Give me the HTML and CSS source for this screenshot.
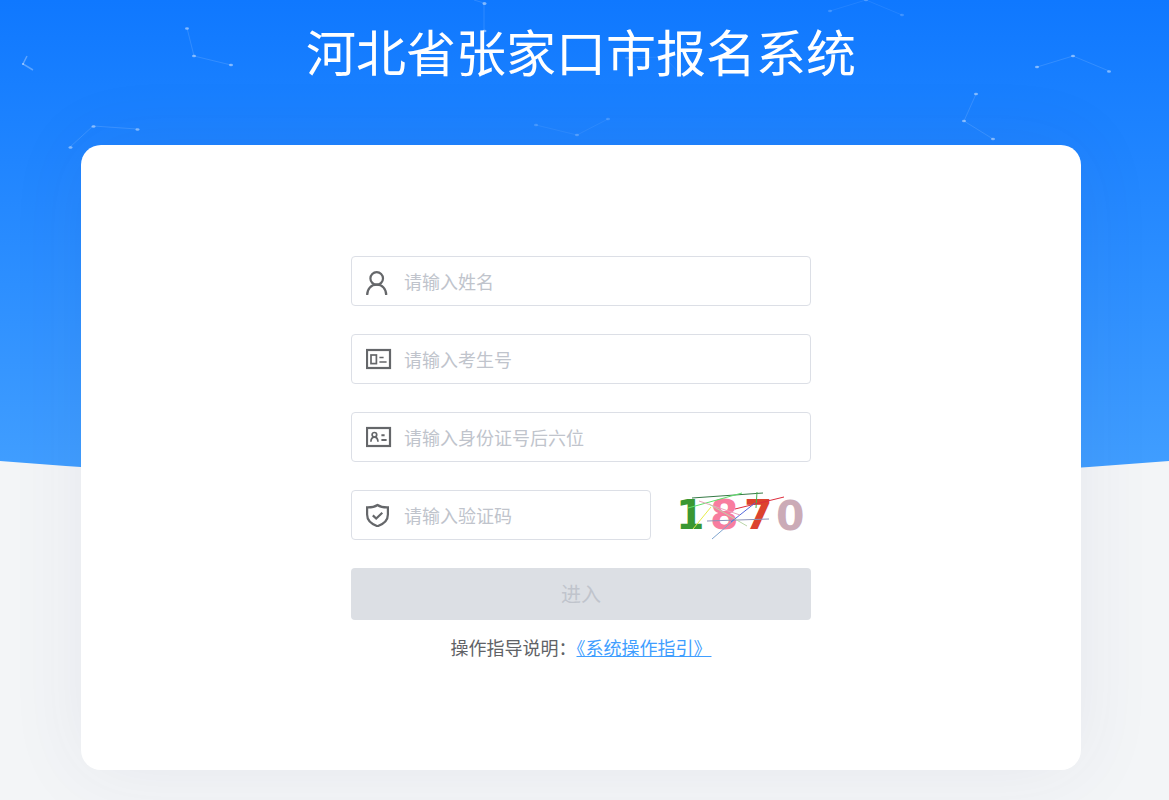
FILE: index.html
```html
<!DOCTYPE html>
<html lang="zh-CN">
<head>
    <meta charset="UTF-8">
    <meta name="viewport" content="width=device-width, initial-scale=1.0">
    <title>河北省张家口市报名系统</title>
    <link rel="stylesheet" href="styles.css">
</head>
<body>

<div class="page">
    <svg class="page-bg" viewBox="0 0 1169 520" preserveAspectRatio="none" aria-hidden="true">
        <defs>
            <linearGradient id="sky" x1="0" y1="0" x2="0" y2="1">
                <stop offset="0" stop-color="#0f78ff"/>
                <stop offset="1" stop-color="#429fff"/>
            </linearGradient>
        </defs>
        <path d="M0 0H1169V461Q584 508 0 461Z" fill="url(#sky)"/>
        <g class="lines">
            <path class="bright" d="M27 56L23 64L33 70"/>
            <path d="M187 28L194 56L231 65"/>
            <path d="M70 147L93 126L137 129"/>
            <path d="M474 0L484 3V31"/>
            <path d="M536 125L577 135L608 119" opacity=".5"/>
            <path d="M627 58L664 57L684 78" opacity=".5"/>
            <path d="M830 11L866 0L902 15" opacity=".6"/>
            <path d="M1037 67L1073 56L1109 71"/>
            <path d="M976 94L964 121L993 139"/>
        </g>
        <g class="dots">
            <ellipse cx="23" cy="64" rx="1" ry="1"/>
            <ellipse cx="187" cy="28.5" rx="2" ry="1.3"/>
            <ellipse cx="194" cy="56" rx="2" ry="1.3"/>
            <ellipse cx="231" cy="65" rx="2" ry="1.3"/>
            <ellipse cx="70.5" cy="147.5" rx="2" ry="1.3"/>
            <ellipse cx="93.5" cy="126.5" rx="2" ry="1.3"/>
            <ellipse cx="137.5" cy="129.5" rx="2" ry="1.3"/>
            <ellipse cx="484.5" cy="3.5" rx="2" ry="1.5"/>
            <ellipse cx="484.5" cy="31" rx="2" ry="1.3"/>
            <ellipse cx="536" cy="125" rx="2" ry="1.3" opacity=".4"/>
            <ellipse cx="577" cy="135" rx="2" ry="1.3" opacity=".5"/>
            <ellipse cx="608" cy="119" rx="2" ry="1.3" opacity=".4"/>
            <ellipse cx="627" cy="58" rx="2" ry="1.3" opacity=".4"/>
            <ellipse cx="830" cy="11" rx="2" ry="1.3" opacity=".4"/>
            <ellipse cx="866" cy="0" rx="2" ry="1.3" opacity=".5"/>
            <ellipse cx="902" cy="15" rx="2" ry="1.3" opacity=".4"/>
            <ellipse cx="1037" cy="67" rx="2" ry="1.3"/>
            <ellipse cx="1073" cy="56" rx="2" ry="1.3"/>
            <ellipse cx="1109" cy="71.5" rx="2" ry="1.3"/>
            <ellipse cx="976" cy="94" rx="2" ry="1.3"/>
            <ellipse cx="964" cy="121" rx="2" ry="1.3"/>
            <ellipse cx="993" cy="139" rx="2" ry="1.3"/>
        </g>
    </svg>

    <main class="content">
        <h1 class="title">河北省张家口市报名系统</h1>

        <div class="card">
            <form class="login-form">
                <label class="field">
                    <svg class="icon" width="26" height="28" viewBox="0 0 26 28" role="img" aria-label="姓名">
                        <circle cx="10.7" cy="11.4" r="6.3"/>
                        <path d="M1.2 28C1.2 21.8 5.2 17.7 10.7 17.7S20.2 21.8 20.2 28"/>
                    </svg>
                    <input type="text" name="name" placeholder="请输入姓名">
                </label>

                <label class="field">
                    <svg class="icon" width="26" height="24" viewBox="0 0 26 24" role="img" aria-label="考生号">
                        <rect x="1" y="3" width="23" height="18"/>
                        <rect x="5" y="8" width="5.4" height="8.6" stroke-width="1.7"/>
                        <path d="M13.4 10.5H17.6M13.4 15H20.6" stroke-width="1.7"/>
                    </svg>
                    <input type="text" name="examNo" placeholder="请输入考生号">
                </label>

                <label class="field">
                    <svg class="icon" width="26" height="24" viewBox="0 0 26 24" role="img" aria-label="身份证号">
                        <rect x="1" y="3" width="23" height="18"/>
                        <circle cx="8.4" cy="9.8" r="2.3" stroke-width="1.7"/>
                        <path d="M4.9 16.8C5 13.8 6.4 12.1 8.4 12.1S11.8 13.8 12 16.8" stroke-width="1.7"/>
                        <path d="M15.4 10.2H18.6M15.4 15H20.6" stroke-width="1.9"/>
                    </svg>
                    <input type="text" name="idCard" placeholder="请输入身份证号后六位">
                </label>

                <div class="captcha-row">
                    <label class="field">
                        <svg class="icon" width="26" height="24" viewBox="0 0 26 24" role="img" aria-label="验证码">
                            <path d="M11.5 2C8.8 3.8 5.2 4.5 1.1 4.4V11.6C1.1 17.4 5.4 21.2 11.5 23.2C17.6 21.2 21.9 17.4 21.9 11.6V4.4C17.8 4.5 14.2 3.8 11.5 2Z"/>
                            <path d="M6.8 12.4L10.2 15.6L16.3 9.8"/>
                        </svg>
                        <input type="text" name="captcha" placeholder="请输入验证码">
                    </label>
                    <button type="button" class="captcha" aria-label="刷新验证码">
                        <svg width="160" height="50" viewBox="0 0 160 50">
                            <g class="digits">
                                <text x="25" y="39" fill="#3a9732">1</text>
                                <text x="59" y="39" fill="#f87d9f">8</text>
                                <text x="93" y="39" fill="#dc422e">7</text>
                                <text x="125" y="40" fill="#cbabb7">0</text>
                            </g>
                            <g class="noise">
                                <path d="M41 8L112 3" stroke="#357a45"/>
                                <path d="M37 18L91 3" stroke="#5fe06a"/>
                                <path d="M106 2L105 18" stroke="#48b04c"/>
                                <path d="M84 19L133 7" stroke="#dd2c3c"/>
                                <path d="M56 31L118 29" stroke="#8d92b8"/>
                                <path d="M61 49L83 30" stroke="#7fa5cf"/>
                                <path d="M80 32L104 13" stroke="#5468dc"/>
                                <path d="M42 39L60 17" stroke="#e6ec4a"/>
                                <path d="M48 11L89 25" stroke="#e9a5bb"/>
                                <path d="M58 14L96 36" stroke="#b9d5a8"/>
                            </g>
                        </svg>
                    </button>
                </div>

                <button type="submit" class="submit" disabled>进入</button>
            </form>

            <p class="guide">操作指导说明&#65306;<a href="#">《系统操作指引》</a></p>
        </div>
    </main>
</div>

</body>
</html>
```
FILE: styles.css
```css
* {
    box-sizing: border-box;
}
body {
    margin: 0;
    background: #f3f5f7;
    color: #606266;
    font-family: "Noto Sans CJK SC", "Microsoft YaHei", sans-serif;
    font-size: 18px;
    line-height: 24px;
}
/* background and content share one grid cell */
.page {
    display: grid;
    grid-template-columns: minmax(0, 1fr);
    min-height: 100vh;
    overflow: hidden;
}
.page-bg,
.content {
    grid-area: 1 / 1;
}
.page-bg {
    width: 100%;
    height: 520px;
}
.lines path {
    fill: none;
    stroke: rgba(255, 255, 255, 0.13);
}
.lines .bright {
    stroke: rgba(255, 255, 255, 0.3);
    stroke-width: 1.5;
}
.dots {
    fill: rgba(255, 255, 255, 0.45);
}
.content {
    padding: 14px 7px 30px 0;
    z-index: 1;
}
.title {
    margin: 0 0 59px;
    color: #fff;
    font-size: 50px;
    font-weight: 400;
    line-height: 72px;
    text-align: center;
}
.card {
    max-width: 1000px;
    margin: 0 auto;
    padding: 111px 20px;
    border-radius: 20px;
    background: #fff;
    box-shadow: 0 0 80px rgba(60, 50, 110, 0.07);
}
.login-form {
    display: flex;
    flex-direction: column;
    gap: 28px;
    max-width: 460px;
    margin: 0 auto;
}
.field {
    display: flex;
    align-items: center;
    gap: 12px;
    height: 50px;
    padding: 0 14px;
    border: 1px solid #dcdfe6;
    border-radius: 4px;
    background: #fff;
}
.field:focus-within {
    border-color: #409eff;
}
.icon {
    flex: none;
    fill: none;
    stroke: #65676a;
    stroke-width: 2.2;
}
.field input {
    flex: 1;
    min-width: 0;
    padding: 0;
    border: 0;
    outline: none;
    background: none;
    color: #606266;
    font: inherit;
}
.field input::placeholder {
    color: #c0c4cc;
    opacity: 1;
}
.captcha-row {
    display: flex;
}
.captcha-row .field {
    flex: 1;
}
.captcha {
    padding: 0;
    border: 0;
    background: none;
    cursor: pointer;
}
.captcha svg {
    display: block;
}
.digits {
    font-family: "DejaVu Sans", sans-serif;
    font-size: 41px;
    font-weight: 700;
}
.noise {
    fill: none;
    stroke-width: 1;
}
.submit {
    height: 52px;
    border: 0;
    border-radius: 4px;
    background: #dcdfe4;
    color: #c0c4cc;
    font: inherit;
    font-size: 20px;
}
.guide {
    margin: 15px 0 0;
    text-align: center;
}
.guide a {
    color: #409eff;
}
```
